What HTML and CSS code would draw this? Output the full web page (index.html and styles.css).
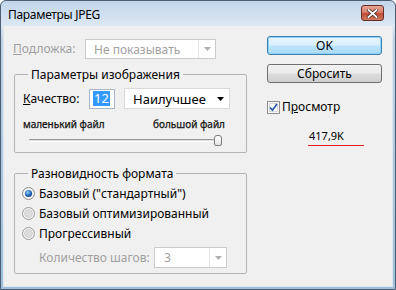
FILE: index.html
```html
<!DOCTYPE html>
<html lang="ru">
<head>
    <meta charset="UTF-8">
    <link rel="stylesheet" href="styles.css">
    <title>Параметры JPEG</title>
</head>
<body>
    <div class="window">
        <div class="titlebar">
            <span class="title">Параметры JPEG</span>
            <span class="close-btn">
                <svg width="11" height="9" viewBox="0 0 11 9">
                    <path d="M1.5 1 L9.5 8 M9.5 1 L1.5 8" stroke="#4a2a25" stroke-width="3.4" stroke-linecap="square"/>
                    <path d="M1.5 1 L9.5 8 M9.5 1 L1.5 8" stroke="#fff" stroke-width="1.8" stroke-linecap="square"/>
                </svg>
            </span>
        </div>

        <div class="client">
            <div class="left-col">
                <div class="matte-row">
                    <span class="field-label disabled"><u>П</u>одложка:</span>
                    <div class="select select-disabled matte-select">
                        <span class="select-text">Не показывать</span>
                        <span class="select-arrow"><svg width="7" height="4" viewBox="0 0 7 4"><path d="M0 0 H7 L3.5 4 Z" fill="#b0b0b0"/></svg></span>
                    </div>
                </div>

                <fieldset class="group group-image">
                    <legend>Параметры изображения</legend>
                    <div class="quality-row">
                        <span class="field-label quality-label"><u>К</u>ачество:</span>
                        <span class="num-input"><span class="selected-text">12</span></span>
                        <div class="select quality-select">
                            <span class="select-text">Наилучшее</span>
                            <span class="select-arrow plain"><svg width="7" height="4" viewBox="0 0 7 4"><path d="M0 0 H7 L3.5 4 Z" fill="#000"/></svg></span>
                        </div>
                    </div>
                    <div class="size-labels">
                        <span>маленький файл</span>
                        <span>большой файл</span>
                    </div>
                    <div class="slider">
                        <div class="slider-track"></div>
                        <div class="slider-thumb"></div>
                    </div>
                </fieldset>

                <fieldset class="group group-format">
                    <legend>Разновидность формата</legend>
                    <div class="radio-row">
                        <svg class="radio" width="13" height="13" viewBox="0 0 13 13">
                            <defs>
                                <radialGradient id="dot" cx="0.4" cy="0.35" r="0.7">
                                    <stop offset="0" stop-color="#8fd0f5"/>
                                    <stop offset="0.55" stop-color="#2b72c2"/>
                                    <stop offset="1" stop-color="#123f7a"/>
                                </radialGradient>
                            </defs>
                            <circle cx="6.5" cy="6.5" r="6" fill="#f4f4f4" stroke="#8c8c8c"/>
                            <circle cx="6.5" cy="6.5" r="3.6" fill="url(#dot)"/>
                        </svg>
                        <span>Базовый ("стандартный")</span>
                    </div>
                    <div class="radio-row">
                        <svg class="radio" width="13" height="13" viewBox="0 0 13 13">
                            <circle cx="6.5" cy="6.5" r="6" fill="#f4f4f4" stroke="#9a9a9a"/>
                            <circle cx="6.5" cy="6.5" r="4" fill="#dcdcdc" stroke="#c4c4c4" stroke-width="0.6"/>
                        </svg>
                        <span>Базовый оптимизированный</span>
                    </div>
                    <div class="radio-row">
                        <svg class="radio" width="13" height="13" viewBox="0 0 13 13">
                            <circle cx="6.5" cy="6.5" r="6" fill="#f4f4f4" stroke="#9a9a9a"/>
                            <circle cx="6.5" cy="6.5" r="4" fill="#dcdcdc" stroke="#c4c4c4" stroke-width="0.6"/>
                        </svg>
                        <span>Прогрессивный</span>
                    </div>
                    <div class="steps-row">
                        <span class="field-label disabled steps-label">Количество шагов:</span>
                        <div class="select select-disabled steps-select">
                            <span class="select-text">3</span>
                            <span class="select-arrow"><svg width="7" height="4" viewBox="0 0 7 4"><path d="M0 0 H7 L3.5 4 Z" fill="#b0b0b0"/></svg></span>
                        </div>
                    </div>
                </fieldset>
            </div>

            <div class="right-col">
                <button class="btn btn-default">OK</button>
                <button class="btn">Сбросить</button>
                <label class="preview">
                    <svg width="13" height="13" viewBox="0 0 13 13">
                        <rect x="0.5" y="0.5" width="12" height="12" fill="#f6f6f6" stroke="#8e8f8f"/>
                        <rect x="2.5" y="2.5" width="8" height="8" fill="#fff" stroke="#d8d8d8"/>
                        <path d="M3 6.5 L5.5 9.2 L10 3" fill="none" stroke="#2a5aa8" stroke-width="1.8"/>
                    </svg>
                    <span>П<u>р</u>осмотр</span>
                </label>
                <div class="file-size">417,9K</div>
                <div class="red-mark"></div>
            </div>
        </div>
    </div>
</body>
</html>
```

FILE: styles.css
```css
* {
    box-sizing: border-box;
}

body {
    margin: 0;
    font-family: "Noto Sans", "Open Sans", sans-serif;
    font-size: 12px;
    color: #000;
    background: #fff;
}

.window {
    width: 396px;
    height: 290px;
    border: 1px solid #4b5e72;
    border-radius: 6px 6px 0 0;
    background: linear-gradient(#c2d6eb, #dbe7f3 24px, #bcd2e7 40px, #9cc0dd);
    padding: 0 2px 2px 2px;
    display: flex;
    flex-direction: column;
}

.titlebar {
    height: 24px;
    display: flex;
    align-items: flex-start;
    padding: 0 9px 0 5px;
}

.title {
    margin-top: 5px;
    line-height: 17px;
    letter-spacing: -0.3px;
}

.close-btn {
    margin-left: auto;
    margin-top: 4px;
    width: 23px;
    height: 16px;
    border: 1px solid #6a2b24;
    border-radius: 3px;
    background: linear-gradient(#e7a594, #d8806c 45%, #c24a35 55%, #cf7a5e);
    display: flex;
    align-items: center;
    justify-content: center;
}

.client {
    flex: 1;
    background: #f0f0f0;
    display: flex;
    box-shadow: inset 0 0 0 1px #dfe6ee;
}

.left-col {
    width: 244px;
    padding-left: 11px;
}

.field-label {
    line-height: 16px;
}

.disabled {
    color: #a0a0a0;
}

.matte-row {
    margin-top: 14px;
    display: flex;
    align-items: center;
}

.matte-row .field-label {
    width: 72px;
    margin-left: -1px;
    padding-right: 1px;
}

.select {
    height: 21px;
    background: #fff;
    border: 1px solid #cbcbcb;
    display: flex;
    align-items: center;
    padding-left: 8px;
}

.select-text {
    flex: 1;
}

.select-arrow {
    width: 17px;
    height: 100%;
    border-left: 1px solid #e6e6e6;
    display: flex;
    align-items: center;
    justify-content: center;
}

.select-arrow.plain {
    border-left: none;
}

.select-disabled {
    color: #a0a0a0;
}

.matte-select {
    width: 131px;
    height: 20px;
}

.group {
    margin: 0;
    padding: 0 8px;
    border: 1px solid #b4b4b4;
    border-radius: 2px;
    width: 233px;
}

.group legend {
    margin-left: 5px;
    padding: 0 3px;
    line-height: 15px;
}

.group-image {
    margin-top: 8px;
    height: 86px;
}

.quality-row {
    margin-top: 6px;
    display: flex;
    align-items: center;
}

.quality-label {
    width: 66px;
}

.num-input {
    width: 26px;
    height: 20px;
    background: #fff;
    border: 1px solid #a9b6c8;
    display: flex;
    align-items: center;
    padding-left: 3px;
    font-size: 13px;
}

.selected-text {
    background: #3399ff;
    color: #fff;
    line-height: 15px;
    padding: 0 1px;
}

.quality-select {
    margin-left: 9px;
    width: 106px;
    height: 21px;
    font-size: 13px;
    border-color: #d9d9d9;
}

.size-labels {
    margin-top: 9px;
    display: flex;
    justify-content: space-between;
    font-size: 10px;
    line-height: 13px;
    color: #111;
    padding-right: 13px;
    -webkit-text-stroke: 0.25px #111;
}

.slider {
    margin-top: 3px;
    margin-left: 6px;
    display: flex;
    align-items: center;
    height: 12px;
}

.slider-track {
    width: 185px;
    height: 3px;
    border-top: 1px solid #9a9a9a;
    border-bottom: 1px solid #fff;
    background: #dcdcdc;
    border-radius: 1px;
}

.slider-thumb {
    width: 8px;
    height: 11px;
    border: 1px solid #7b7b7b;
    border-radius: 3px 3px 2px 2px;
    background: linear-gradient(#ffffff, #e3e3e3);
}

.group-format {
    margin-top: 13px;
    height: 108px;
}

.radio-row {
    display: flex;
    align-items: center;
    height: 20px;
    margin-left: -1px;
}

.radio-row:first-of-type {
    margin-top: 2px;
}

.radio {
    margin-right: 4px;
}

.steps-row {
    margin-top: 4px;
    display: flex;
    align-items: center;
}

.steps-label {
    width: 131px;
    padding-left: 16px;
    white-space: nowrap;
}

.steps-select {
    width: 73px;
    height: 21px;
    padding-left: 9px;
}

.right-col {
    margin-left: 20px;
    width: 115px;
    display: flex;
    flex-direction: column;
}

.btn {
    font-family: inherit;
    font-size: 12px;
    height: 19px;
    margin: 0;
    padding: 0;
    border: 1px solid #707070;
    border-radius: 3px;
    background: linear-gradient(#f2f2f2, #ebebeb 49%, #dddddd 51%, #cfcfcf);
    color: #000;
    line-height: 16px;
}

.btn-default {
    margin-top: 11px;
    border-color: #3c7fb1;
    background: linear-gradient(#eaf6fd, #d9f0fc 49%, #bee6fd 51%, #a7d9f5);
    box-shadow: inset 0 0 0 1px #8fd3fb;
}

.btn + .btn {
    margin-top: 9px;
}

.preview {
    margin-top: 16px;
    display: flex;
    align-items: center;
    gap: 2px;
    line-height: 16px;
}

.file-size {
    margin-top: 14px;
    margin-left: 42px;
    font-size: 11px;
    line-height: 14px;
}

.red-mark {
    margin-top: 2px;
    margin-left: 41px;
    width: 56px;
    height: 1px;
    flex: none;
    background: #e02020;
}
```
